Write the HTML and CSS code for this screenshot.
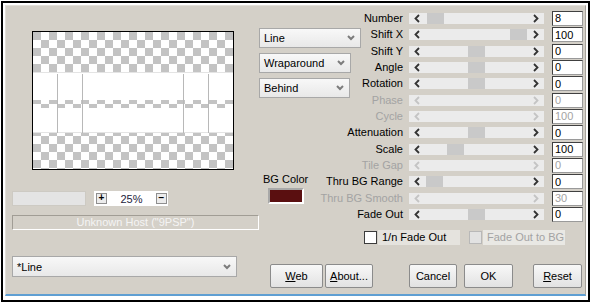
FILE: index.html
```html
<!DOCTYPE html>
<html lang="en">
<head>
    <meta charset="UTF-8">
    <title>Line Filter</title>
    <link rel="stylesheet" href="styles.css">
</head>
<body>
    <div class="frame">
        <div class="dialog">
            <div class="left">
                <div class="preview">
                    <svg width="200" height="137" viewBox="0 0 200 137">
                        <defs>
                            <pattern id="checker" width="16" height="16" patternUnits="userSpaceOnUse">
                                <rect width="16" height="16" fill="#fff"/>
                                <rect width="8" height="8" fill="#c3c3c3"/>
                                <rect x="8" y="8" width="8" height="8" fill="#c3c3c3"/>
                            </pattern>
                        </defs>
                        <rect width="200" height="137" fill="url(#checker)"/>
                        <rect y="40" width="200" height="28" fill="#fff"/>
                        <rect y="76" width="200" height="25" fill="#fff"/>
                        <line x1="0" y1="40.5" x2="200" y2="40.5" stroke="#e4e4e4"/>
                        <line x1="0" y1="100.5" x2="200" y2="100.5" stroke="#e4e4e4"/>
                        <g stroke="#b8b8b8">
                            <line x1="24.5" y1="42" x2="24.5" y2="101"/>
                            <line x1="49.5" y1="42" x2="49.5" y2="101"/>
                            <line x1="150.5" y1="42" x2="150.5" y2="101"/>
                            <line x1="175.5" y1="42" x2="175.5" y2="101"/>
                        </g>
                    </svg>
                </div>
                <div class="zoom-row">
                    <div class="zoom-blank"></div>
                    <div class="zoom-ctl">
                        <span class="zbtn">+</span>
                        <span class="zval">25%</span>
                        <span class="zbtn">&minus;</span>
                    </div>
                </div>
                <div class="host">Unknown Host ("9PSP")</div>
                <div class="combo preset">
                    <span>*Line</span>
                    <svg class="chev" width="8" height="6"><polyline points="1,1 4,4 7,1"/></svg>
                </div>
            </div>

            <div class="right">
                <div class="params">
                    <div class="modes">
                        <div class="combo mode-line"><span>Line</span><svg class="chev" width="8" height="6"><polyline points="1,1 4,4 7,1"/></svg></div>
                        <div class="combo mode-wrap"><span>Wraparound</span><svg class="chev" width="8" height="6"><polyline points="1,1 4,4 7,1"/></svg></div>
                        <div class="combo mode-behind"><span>Behind</span><svg class="chev" width="8" height="6"><polyline points="1,1 4,4 7,1"/></svg></div>
                    </div>

                    <div class="bg-color">
                        <span>BG Color</span>
                        <div class="swatch"></div>
                    </div>

                    <span class="lbl">Number</span>
                    <div class="track"><span class="arrow"><svg width="6" height="9"><polyline points="5,1 1.5,4.5 5,8"/></svg></span><div class="rail"><div class="thumb" style="margin-left: 2px"></div></div><span class="arrow"><svg width="6" height="9"><polyline points="1,1 4.5,4.5 1,8"/></svg></span></div>
                    <input class="num" type="text" value="8">

                    <span class="lbl">Shift X</span>
                    <div class="track"><span class="arrow"><svg width="6" height="9"><polyline points="5,1 1.5,4.5 5,8"/></svg></span><div class="rail"><div class="thumb" style="margin-left: 85px"></div></div><span class="arrow"><svg width="6" height="9"><polyline points="1,1 4.5,4.5 1,8"/></svg></span></div>
                    <input class="num" type="text" value="100">

                    <span class="lbl">Shift Y</span>
                    <div class="track"><span class="arrow"><svg width="6" height="9"><polyline points="5,1 1.5,4.5 5,8"/></svg></span><div class="rail"><div class="thumb" style="margin-left: 43px"></div></div><span class="arrow"><svg width="6" height="9"><polyline points="1,1 4.5,4.5 1,8"/></svg></span></div>
                    <input class="num" type="text" value="0">

                    <span class="lbl">Angle</span>
                    <div class="track"><span class="arrow"><svg width="6" height="9"><polyline points="5,1 1.5,4.5 5,8"/></svg></span><div class="rail"><div class="thumb" style="margin-left: 43px"></div></div><span class="arrow"><svg width="6" height="9"><polyline points="1,1 4.5,4.5 1,8"/></svg></span></div>
                    <input class="num" type="text" value="0">

                    <span class="lbl">Rotation</span>
                    <div class="track"><span class="arrow"><svg width="6" height="9"><polyline points="5,1 1.5,4.5 5,8"/></svg></span><div class="rail"><div class="thumb" style="margin-left: 43px"></div></div><span class="arrow"><svg width="6" height="9"><polyline points="1,1 4.5,4.5 1,8"/></svg></span></div>
                    <input class="num" type="text" value="0">

                    <span class="lbl off">Phase</span>
                    <div class="track off"><span class="arrow"><svg width="6" height="9"><polyline points="5,1 1.5,4.5 5,8"/></svg></span><div class="rail"></div><span class="arrow"><svg width="6" height="9"><polyline points="1,1 4.5,4.5 1,8"/></svg></span></div>
                    <input class="num" type="text" value="0" disabled>

                    <span class="lbl off">Cycle</span>
                    <div class="track off"><span class="arrow"><svg width="6" height="9"><polyline points="5,1 1.5,4.5 5,8"/></svg></span><div class="rail"></div><span class="arrow"><svg width="6" height="9"><polyline points="1,1 4.5,4.5 1,8"/></svg></span></div>
                    <input class="num" type="text" value="100" disabled>

                    <span class="lbl">Attenuation</span>
                    <div class="track"><span class="arrow"><svg width="6" height="9"><polyline points="5,1 1.5,4.5 5,8"/></svg></span><div class="rail"><div class="thumb" style="margin-left: 43px"></div></div><span class="arrow"><svg width="6" height="9"><polyline points="1,1 4.5,4.5 1,8"/></svg></span></div>
                    <input class="num" type="text" value="0">

                    <span class="lbl">Scale</span>
                    <div class="track"><span class="arrow"><svg width="6" height="9"><polyline points="5,1 1.5,4.5 5,8"/></svg></span><div class="rail"><div class="thumb" style="margin-left: 22px"></div></div><span class="arrow"><svg width="6" height="9"><polyline points="1,1 4.5,4.5 1,8"/></svg></span></div>
                    <input class="num" type="text" value="100">

                    <span class="lbl off">Tile Gap</span>
                    <div class="track off"><span class="arrow"><svg width="6" height="9"><polyline points="5,1 1.5,4.5 5,8"/></svg></span><div class="rail"></div><span class="arrow"><svg width="6" height="9"><polyline points="1,1 4.5,4.5 1,8"/></svg></span></div>
                    <input class="num" type="text" value="0" disabled>

                    <span class="lbl">Thru BG Range</span>
                    <div class="track"><span class="arrow"><svg width="6" height="9"><polyline points="5,1 1.5,4.5 5,8"/></svg></span><div class="rail"><div class="thumb" style="margin-left: 1px"></div></div><span class="arrow"><svg width="6" height="9"><polyline points="1,1 4.5,4.5 1,8"/></svg></span></div>
                    <input class="num" type="text" value="0">

                    <span class="lbl off">Thru BG Smooth</span>
                    <div class="track off"><span class="arrow"><svg width="6" height="9"><polyline points="5,1 1.5,4.5 5,8"/></svg></span><div class="rail"></div><span class="arrow"><svg width="6" height="9"><polyline points="1,1 4.5,4.5 1,8"/></svg></span></div>
                    <input class="num" type="text" value="30" disabled>

                    <span class="lbl">Fade Out</span>
                    <div class="track"><span class="arrow"><svg width="6" height="9"><polyline points="5,1 1.5,4.5 5,8"/></svg></span><div class="rail"><div class="thumb" style="margin-left: 43px"></div></div><span class="arrow"><svg width="6" height="9"><polyline points="1,1 4.5,4.5 1,8"/></svg></span></div>
                    <input class="num" type="text" value="0">
                </div>

                <div class="checks">
                    <div class="check">
                        <span class="box"></span>
                        <span class="check-label">1/n Fade Out</span>
                    </div>
                    <div class="check off">
                        <span class="box"></span>
                        <span class="check-label">Fade Out to BG</span>
                    </div>
                </div>

                <div class="buttons">
                    <button class="btn btn-web"><u>W</u>eb</button>
                    <button class="btn btn-about"><u>A</u>bout...</button>
                    <button class="btn btn-cancel">Cancel</button>
                    <button class="btn btn-ok">OK</button>
                    <button class="btn btn-reset"><u>R</u>eset</button>
                </div>
            </div>
        </div>
    </div>
</body>
</html>
```

FILE: styles.css
```css
body {
    margin: 0;
    background-color: #ffffff;
    font-family: "Liberation Sans", Arial, sans-serif;
    font-size: 11px;
    color: #000000;
}
.frame {
    margin: 1px;
    width: 581px;
    height: 291px;
    border: 2px solid #000000;
    padding: 2px 2px 4px 2px;
}
.dialog {
    box-sizing: border-box;
    width: 581px;
    height: 291px;
    display: flex;
    background-color: #d4d0c8;
    border-left: 1px solid #e2dfd8;
    border-top: 1px solid #e2dfd8;
    border-right: 1px solid #a7a39b;
    border-bottom: 2px solid #5f9fd3;
    padding: 4px 0 0 6px;
}
.left {
    width: 247px;
    display: flex;
    flex-direction: column;
}
.preview {
    margin: 21px 0 0 20px;
    width: 200px;
    height: 137px;
    border: 1px solid #000000;
}
.preview svg {
    display: block;
}
.zoom-row {
    margin-top: 21px;
    height: 15px;
    display: flex;
    gap: 8px;
}
.zoom-blank {
    box-sizing: border-box;
    width: 74px;
    background-color: #e4e4e4;
    border: 1px solid #cdcac3;
}
.zoom-ctl {
    box-sizing: border-box;
    width: 74px;
    background-color: #ffffff;
    display: flex;
    align-items: center;
    justify-content: space-between;
    padding: 0 1px 0 2px;
}
.zbtn {
    box-sizing: border-box;
    width: 11px;
    height: 11px;
    border: 1px solid #8f8f8f;
    background-color: #ececec;
    font-size: 10px;
    font-weight: bold;
    line-height: 8px;
    text-align: center;
}
.zval {
    color: #1c1c3c;
}
.host {
    box-sizing: border-box;
    margin-top: 9px;
    height: 15px;
    border: 1px solid;
    border-color: #a19d95 #ffffff #ffffff #a19d95;
    color: #f4f4f4;
    line-height: 13px;
    text-align: center;
}
.combo {
    box-sizing: border-box;
    height: 20px;
    display: flex;
    align-items: center;
    justify-content: space-between;
    border: 1px solid #a8a8a8;
    background: linear-gradient(#f8f8f8, #e8e8e8);
    padding: 0 5px 0 4px;
}
.chev polyline {
    fill: none;
    stroke: #7c7c7c;
    stroke-width: 2;
}
.preset {
    margin-top: 26px;
    width: 225px;
    height: 21px;
}
.right {
    width: 325px;
    display: flex;
    flex-direction: column;
}
.params {
    display: grid;
    grid-template-columns: 61px 83px 141px 39px;
    grid-template-rows: 16px 17px 16px 16px 17px 16px 16px 17px 16px 16px 17px 16px 16px;
}
.modes {
    grid-column: 1;
    grid-row: 2 / 7;
    align-self: start;
    margin-top: 2px;
    display: flex;
    flex-direction: column;
    gap: 5px;
}
.mode-line {
    width: 102px;
}
.mode-wrap {
    width: 92px;
}
.mode-behind {
    width: 91px;
}
.bg-color {
    grid-column: 1;
    grid-row: 11 / 14;
    align-self: start;
    justify-self: start;
    margin-left: 4px;
    display: flex;
    flex-direction: column;
    align-items: center;
    gap: 2px;
    line-height: 13px;
}
.swatch {
    box-sizing: border-box;
    width: 36px;
    height: 16px;
    background-color: #5a0f10;
    border: 2px solid;
    border-color: #a8a8a8 #ffffff #ffffff #a8a8a8;
}
.lbl {
    grid-column: 2;
    align-self: center;
    white-space: nowrap;
    text-align: right;
    line-height: 13px;
}
.lbl.off {
    color: #a3a3a3;
}
.track {
    grid-column: 3;
    justify-self: end;
    align-self: center;
    width: 135px;
    height: 11px;
    display: flex;
    background-color: #ebebeb;
}
.arrow {
    width: 16px;
    display: flex;
    align-items: center;
    justify-content: center;
}
.arrow svg polyline {
    fill: none;
    stroke: #333333;
    stroke-width: 1.8;
}
.track.off .arrow svg polyline {
    stroke: #c4c4c4;
}
.rail {
    flex: 1;
    display: flex;
}
.thumb {
    width: 17px;
    height: 11px;
    background-color: #c9c9c9;
}
.num {
    grid-column: 4;
    justify-self: end;
    align-self: center;
    box-sizing: border-box;
    width: 31px;
    height: 15px;
    margin: 0;
    padding: 0 2px;
    border: 1px solid;
    border-color: #404040 #9a9a9a #9a9a9a #404040;
    background-color: #ffffff;
    font: inherit;
    color: #000000;
    outline: none;
}
.num:disabled {
    color: #a3a3a3;
}
.checks {
    margin: 8px 0 0 105px;
    display: flex;
    gap: 9px;
}
.check {
    display: flex;
    align-items: center;
}
.box {
    box-sizing: border-box;
    width: 13px;
    height: 13px;
    border: 1px solid #3c3c3c;
    background-color: #ffffff;
}
.check-label {
    box-sizing: border-box;
    width: 82px;
    height: 15px;
    margin-left: 1px;
    padding-left: 4px;
    background-color: #e5e3de;
    line-height: 15px;
    white-space: nowrap;
}
.check.off .box {
    border-color: #b8b8b8;
    background-color: #e2e2e2;
}
.check.off .check-label {
    color: #a3a3a3;
    background-color: #e9e8e4;
}
.buttons {
    margin-top: 19px;
    display: flex;
}
.btn {
    box-sizing: border-box;
    height: 24px;
    padding: 0;
    border: 1px solid #8b8b8b;
    border-radius: 2px;
    background: linear-gradient(#f8f8f8, #e2e2e2);
    font: inherit;
    color: #000000;
}
.btn-web {
    margin-left: 11px;
    width: 53px;
}
.btn-about {
    margin-left: 2px;
    width: 48px;
}
.btn-cancel {
    margin-left: 36px;
    width: 48px;
}
.btn-ok {
    margin-left: 7px;
    width: 49px;
}
.btn-reset {
    margin-left: 20px;
    width: 49px;
}
```
